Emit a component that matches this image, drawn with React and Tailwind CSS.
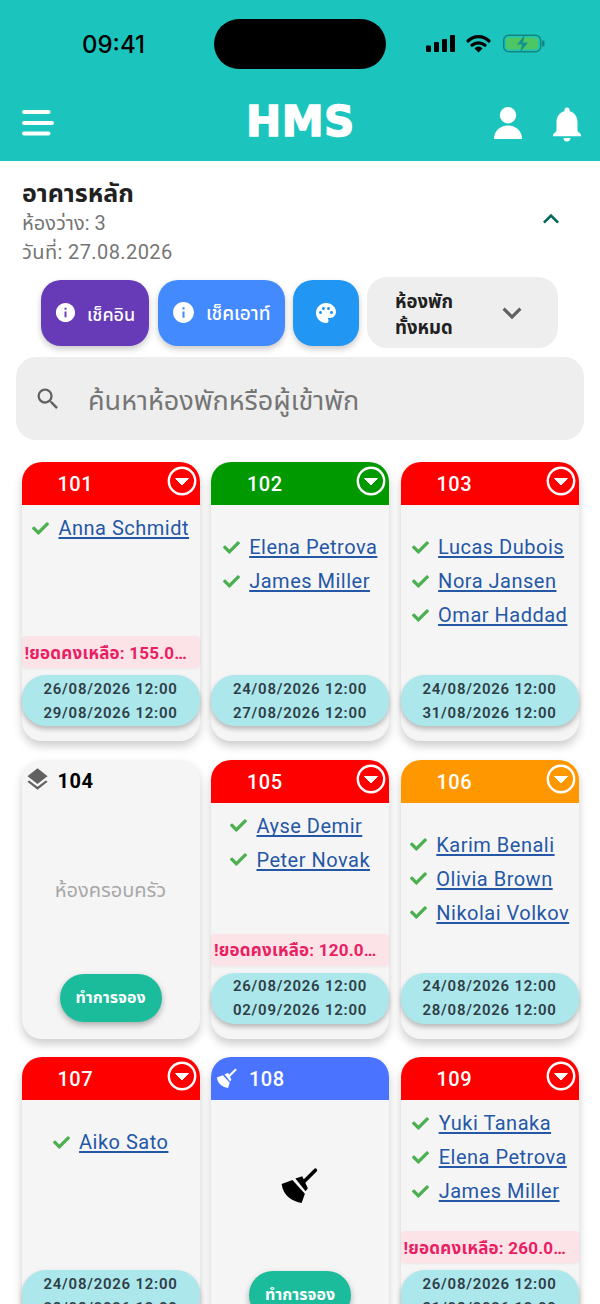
import React from "react";
import { FaCheck } from "react-icons/fa";
import { MdInfo, MdPalette, MdSearch, MdLayers, MdNotifications, MdKeyboardArrowUp, MdKeyboardArrowDown } from "react-icons/md";

const font = { fontFamily: 'Roboto, "Noto Sans", "Noto Sans Thai", "Noto Sans CJK SC", sans-serif' };

const rooms = [
  { n: "101", c: "bg-[#ff0000]", names: ["Anna Schmidt"], bal: "155.0", d: ["26/08/2026 12:00", "29/08/2026 12:00"] },
  { n: "102", c: "bg-[#009900]", names: ["Elena Petrova", "James Miller"], d: ["24/08/2026 12:00", "27/08/2026 12:00"] },
  { n: "103", c: "bg-[#ff0000]", names: ["Lucas Dubois", "Nora Jansen", "Omar Haddad"], d: ["24/08/2026 12:00", "31/08/2026 12:00"] },
  { n: "104", type: "family" },
  { n: "105", c: "bg-[#ff0000]", names: ["Ayse Demir", "Peter Novak"], bal: "120.0", d: ["26/08/2026 12:00", "02/09/2026 12:00"] },
  { n: "106", c: "bg-[#ff9800]", names: ["Karim Benali", "Olivia Brown", "Nikolai Volkov"], d: ["24/08/2026 12:00", "28/08/2026 12:00"] },
  { n: "107", c: "bg-[#ff0000]", names: ["Aiko Sato"], d: ["24/08/2026 12:00", "28/08/2026 12:00"] },
  { n: "108", type: "clean" },
  { n: "109", c: "bg-[#ff0000]", names: ["Yuki Tanaka", "Elena Petrova", "James Miller"], bal: "260.0", d: ["26/08/2026 12:00", "31/08/2026 12:00"] },
];

function Broom({ size, className }) {
  return (
    <svg width={size} height={size} viewBox="60 52 116 112" className={className} fill="currentColor">
      <path d="M168 60L132 96" stroke="currentColor" strokeWidth="11" strokeLinecap="round" fill="none" />
      <path d="M107 85L128 78L145 115L138 124z" />
      <path d="M65 102L98 90L136 132L126 160C98 155 70 140 65 102z" />
    </svg>
  );
}

function DropCircle() {
  return (
    <svg width="30" height="30" viewBox="0 0 30 30" fill="none">
      <circle cx="15" cy="15" r="13.2" stroke="white" strokeWidth="2.4" />
      <path d="M8.5 12.5h13L15 19z" fill="white" stroke="white" strokeWidth="1" strokeLinejoin="round" />
    </svg>
  );
}

function BookBtn() {
  return (
    <div className="w-[102px] h-[48px] rounded-full bg-[#1abc9c] text-white text-[16px] font-bold flex items-center justify-center shadow-[0_3px_6px_rgba(0,0,0,0.3)]">
      ทำการจอง
    </div>
  );
}

function Card({ r }) {
  if (r.type === "family") {
    return (
      <div className="h-[279px] rounded-[20px] bg-[#f5f5f5] shadow-[0_5px_10px_rgba(0,0,0,0.2)] flex flex-col items-center">
        <div className="w-full h-[43px] flex items-center pl-[2px] gap-[7px] text-[20px] font-bold text-black tracking-[0.5px]">
          <MdLayers size={27} className="text-[#616161] -mt-[3px]" />
          <span>104</span>
        </div>
        <div className="flex-1 flex items-center text-[20px] text-[#a8a8a8] pt-[4px]">ห้องครอบครัว</div>
        <div className="pb-[17px]"><BookBtn /></div>
      </div>
    );
  }
  if (r.type === "clean") {
    return (
      <div className="h-[279px] rounded-[20px] bg-[#f5f5f5] shadow-[0_5px_10px_rgba(0,0,0,0.2)] flex flex-col items-center">
        <div className="w-full h-[43px] rounded-t-[20px] bg-[#4a74ff] flex items-center pl-[5px] gap-[12px] text-[20px] font-medium text-white tracking-[0.5px]">
          <Broom size={21} />
          <span>108</span>
        </div>
        <div className="flex-1 flex items-center justify-center pr-[2px]"><Broom size={38} className="text-black" /></div>
        <div className="pb-[17px]"><BookBtn /></div>
      </div>
    );
  }
  return (
    <div className="h-[279px] rounded-[20px] bg-[#f5f5f5] shadow-[0_5px_10px_rgba(0,0,0,0.2)] flex flex-col">
      <div className={`h-[43px] shrink-0 rounded-t-[20px] ${r.c} flex justify-between pl-[36px] pr-[3px] pt-[4px] text-white text-[20px] font-medium tracking-[0.5px]`}>
        <span className="leading-[36px]">{r.n}</span>
        <DropCircle />
      </div>
      <div className={`flex-1 flex justify-center ${r.bal ? "pt-[6px]" : "pt-[25px]"}`}>
        <div className="inline-flex flex-col items-start">
          {r.names.map((name) => (
            <div key={name} className="h-[34px] flex items-center gap-[9.5px]">
              <FaCheck size={17} className="text-[#4caf50]" />
              <span className="text-[20px] leading-[24px] text-[#2557a7] tracking-[0.5px] underline underline-offset-[2px] decoration-[1.5px] [text-decoration-skip-ink:none] whitespace-nowrap">{name}</span>
            </div>
          ))}
        </div>
      </div>
      {r.bal && (
        <div className="h-[32px] shrink-0 rounded-[4px] bg-[#fbe3e8] text-[#e91e63] text-[17px] font-bold flex items-center px-[3px] pt-[3px] whitespace-nowrap overflow-hidden tracking-[0.2px] shadow-[0_1px_3px_rgba(0,0,0,0.05)]">
          !ยอดคงเหลือ: {r.bal}…
        </div>
      )}
      <div className={`h-[51px] shrink-0 rounded-[24px] bg-[#ace7ec] ${r.bal ? "mt-[7px]" : ""} mb-[15px] flex flex-col items-center justify-center text-[15px] leading-[24px] font-semibold text-[#2f3e46] tracking-[0.75px] shadow-[0_3px_5px_rgba(0,0,0,0.25)]`}>
        <span>{r.d[0]}</span>
        <span>{r.d[1]}</span>
      </div>
    </div>
  );
}

export default function App() {
  return (
    <div className="w-[600px] h-[1304px] overflow-hidden bg-white relative" style={font}>
      <div className="h-[161px] bg-[#1bc5bd] flex flex-col">
        <div className="h-[88px] relative flex items-center">
          <span className="absolute left-[82px] top-[28px] text-[24px] leading-[34px] font-medium text-black" style={{ fontFamily: "Inter, sans-serif" }}>09:41</span>
          <div className="absolute left-[214px] top-[19px] w-[172px] h-[50px] rounded-full bg-black" />
          <svg className="absolute left-[425px] top-[32px]" width="122" height="22" viewBox="0 0 122 22">
            <rect x="1" y="13.5" width="5" height="6.5" rx="1" fill="#000" />
            <rect x="9" y="10" width="5" height="10" rx="1" fill="#000" />
            <rect x="17" y="7" width="5" height="13" rx="1" fill="#000" />
            <rect x="25" y="3" width="5" height="17" rx="1" fill="#000" />
            <path d="M43 9a15 15 0 0 1 21 0" stroke="#000" strokeWidth="3.2" fill="none" strokeLinecap="round" />
            <path d="M47 13.2a10 10 0 0 1 13 0" stroke="#000" strokeWidth="3.2" fill="none" strokeLinecap="round" />
            <path d="M49.5 16.5a5 5 0 0 1 8 0L53.5 20.5z" fill="#000" />
            <rect x="78.7" y="3.2" width="37" height="16.5" rx="5" fill="none" stroke="#14857d" strokeWidth="1.5" />
            <rect x="81" y="5.5" width="32" height="12" rx="3" fill="#4cc764" />
            <rect x="117" y="8.5" width="2.5" height="6" rx="1" fill="#14857d" />
            <path d="M100 2.5l-8 10h5l-2 8 8-10h-5z" fill="#16938c" />
          </svg>
        </div>
        <div className="h-[73px] relative flex items-start justify-between pl-[22px] pr-[12px] pt-[15px]">
          <svg width="34" height="32" viewBox="0 0 34 32" className="mt-[3px]">
            <rect x="0" y="4" width="28.5" height="4" rx="2" fill="#fff" />
            <rect x="0" y="15" width="32" height="4" rx="2" fill="#fff" />
            <rect x="0" y="25.5" width="28.5" height="4" rx="2" fill="#fff" />
          </svg>
          <span className="absolute left-[246px] top-[12px] text-[42px] leading-[44px] font-black text-white tracking-[0.5px] [-webkit-text-stroke:1.5px_white]" style={{ fontFamily: '"DejaVu Sans", sans-serif' }}>HMS</span>
          <div className="flex items-start gap-[24px]">
            <svg width="28" height="32" viewBox="0 0 28 32" className="mt-[4px]" fill="#fff">
              <circle cx="14" cy="8.2" r="8.2" />
              <path d="M0 32C0 24 6 18.5 14 18.5S28 24 28 32z" />
            </svg>
            <MdNotifications size={42} className="text-white" />
          </div>
        </div>
      </div>

      <div className="h-[116px] pl-[22px] pr-[33px] flex items-center justify-between">
        <div className="flex flex-col pt-[7px]">
          <span className="text-[25px] leading-[30px] font-bold text-[#212121]">อาคารหลัก</span>
          <span className="text-[20px] leading-[29px] text-[#757575]">ห้องว่าง: 3</span>
          <span className="text-[20px] leading-[29px] text-[#757575] tracking-[0.4px]">วันที่: 27.08.2026</span>
        </div>
        <MdKeyboardArrowUp size={32} className="text-[#00695c]" />
      </div>

      <div className="flex items-center pl-[41px] h-[71px] mt-[0px]">
        <div className="w-[108px] h-[66px] rounded-[20px] bg-[#673ab7] flex items-center pl-[13px] gap-[10px] text-white text-[18px] font-medium shadow-[0_3px_6px_rgba(0,0,0,0.22)]">
          <MdInfo size={23} /><span className="pt-[3px]">เช็คอิน</span>
        </div>
        <div className="w-[127px] h-[66px] ml-[9px] rounded-[20px] bg-[#448aff] flex items-center pl-[13px] gap-[10px] text-white text-[19px] font-medium shadow-[0_3px_6px_rgba(0,0,0,0.22)]">
          <MdInfo size={25} /><span className="pt-[3px]">เช็คเอาท์</span>
        </div>
        <div className="w-[66px] h-[66px] ml-[8px] rounded-[20px] bg-[#2196f3] flex items-center justify-center text-white shadow-[0_3px_6px_rgba(0,0,0,0.22)]">
          <MdPalette size={24} />
        </div>
        <div className="w-[191px] h-[71px] ml-[8px] rounded-[20px] bg-[#eeeeee] flex items-center justify-between pl-[28px] pr-[27px]">
          <span className="text-[18.5px] leading-[26px] font-bold text-[#212121] pt-[5px]">ห้องพัก<br />ทั้งหมด</span>
          <MdKeyboardArrowDown size={38} className="text-[#616161]" />
        </div>
      </div>

      <div className="mx-[16px] mt-[9px] h-[83px] rounded-[20px] bg-[#eeeeee] flex items-center pl-[18px] gap-[26px]">
        <MdSearch size={28} className="text-[#616161]" />
        <span className="text-[27px] text-[#757575] pt-[5px]">ค้นหาห้องพักหรือผู้เข้าพัก</span>
      </div>

      <div className="grid grid-cols-[178px_178px_178px] gap-x-[11.5px] gap-y-[18.5px] pl-[21.5px] pt-[22px]">
        {rooms.map((r) => <Card key={r.n} r={r} />)}
      </div>
    </div>
  );
}
